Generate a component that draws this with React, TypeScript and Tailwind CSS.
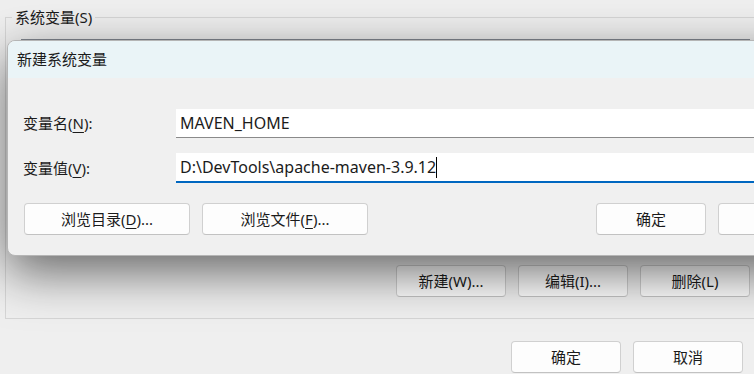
import type { ReactNode } from "react";

const FONT = { fontFamily: '"Noto Sans", "Noto Sans CJK SC", sans-serif' };

function Key({ k }: { k: string }) {
  return <span className="underline underline-offset-[3px] decoration-1">{k}</span>;
}

function Btn({ children, w = "w-[110px]" }: { children?: ReactNode; w?: string }) {
  return (
    <button
      type="button"
      className={`${w} h-[32px] shrink-0 rounded-[4px] border border-[#d0d0d0] border-b-[#c2c2c2] bg-[#fdfdfd] text-[15px] text-[#1b1b1b] flex items-center justify-center`}
    >
      {children}
    </button>
  );
}

export default function App() {
  return (
    <div className="relative w-[754px] h-[374px] overflow-hidden bg-[#efefef] text-[#1b1b1b]" style={FONT}>
      {/* parent window: environment variables */}
      <div className="pl-[5px] pt-[17px]">
        <div className="relative w-[770px] h-[302px] border border-[#d6d6d6]">
          <span className="absolute left-[6px] top-[-11px] bg-[#efefef] px-[3px] text-[15px] leading-[20px]">
            系统变量(S)
          </span>
          <div className="pt-[21px] pl-[15px]">
            <div className="w-[729px] h-[217px] border border-[#828790] bg-white" />
            <div className="mt-[9px] flex gap-[12px] pl-[375px]">
              <Btn>新建(W)...</Btn>
              <Btn>编辑(I)...</Btn>
              <Btn>删除(L)</Btn>
            </div>
          </div>
        </div>
        <div className="mt-[22px] flex gap-[12px] pl-[506px]">
          <Btn>确定</Btn>
          <Btn>取消</Btn>
        </div>
      </div>

      {/* modal dialog */}
      <div className="absolute left-[7px] top-[40px] w-[850px] h-[216px] overflow-hidden rounded-[8px] border border-[#b5b5b5] bg-[#f0f0f0] shadow-[0_16px_50px_rgba(0,0,0,0.58)]">
        <div className="h-[37px] bg-[#eaf4f7] pl-[9px] flex items-center text-[15px]">新建系统变量</div>
        <div className="pt-[31px] pl-[15px]">
          <div className="flex items-center">
            <div className="w-[153px] text-[15px]">
              变量名(<Key k="N" />):
            </div>
            <div className="flex-1 h-[29px] bg-white border-b border-[#8a8a8a] pl-[4px] flex items-center text-[16px]">
              MAVEN_HOME
            </div>
          </div>
          <div className="mt-[15px] flex items-center">
            <div className="w-[153px] text-[15px]">
              变量值(<Key k="V" />):
            </div>
            <div className="flex-1 h-[30px] bg-white border-b-2 border-[#0067c0] pl-[4px] flex items-center text-[16px]">
              D:\DevTools\apache-maven-3.9.12
              <span className="inline-block w-px h-[21px] bg-black" />
            </div>
          </div>
          <div className="mt-[20px] flex gap-[12px] pl-[1px]">
            <Btn w="w-[166px]">
              浏览目录(<Key k="D" />)...
            </Btn>
            <Btn w="w-[166px]">
              浏览文件(<Key k="F" />)...
            </Btn>
            <div className="ml-[216px] flex gap-[12px]">
              <Btn>确定</Btn>
              {/* cancel button: its label sits past the window edge */}
              <Btn />
            </div>
          </div>
        </div>
      </div>
    </div>
  );
}
